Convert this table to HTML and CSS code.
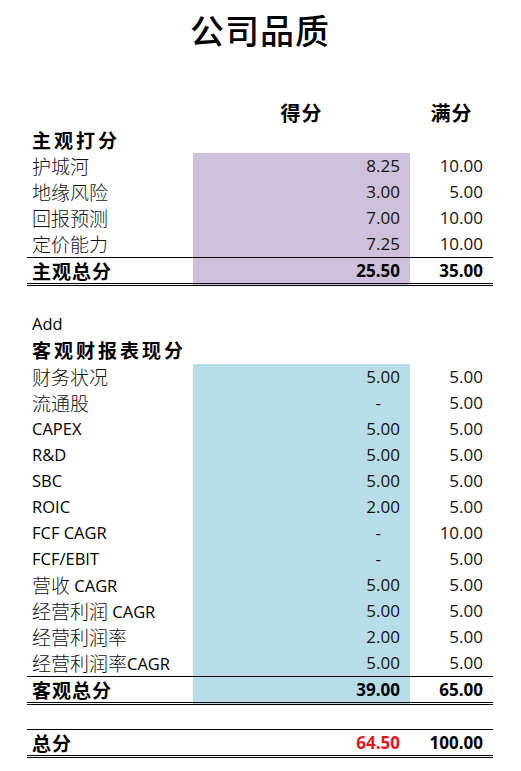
FILE: index.html
```html
<!DOCTYPE html>
<html lang="zh-CN">
<head>
<meta charset="utf-8">
<title>公司品质</title>
<link rel="stylesheet" href="styles.css">
</head>
<body>
<div class="sheet">
  <h1 class="title">公司品质</h1>

  <div class="row head">
    <div></div>
    <div class="hcell">得分</div>
    <div class="hcell">满分</div>
  </div>

  <div class="row sect first-sect"><div class="label bold">主观打分</div></div>

  <div class="row"><div class="label">护城河</div><div class="num score purple">8.25</div><div class="num">10.00</div></div>
  <div class="row"><div class="label">地缘风险</div><div class="num score purple">3.00</div><div class="num">5.00</div></div>
  <div class="row"><div class="label">回报预测</div><div class="num score purple">7.00</div><div class="num">10.00</div></div>
  <div class="row"><div class="label">定价能力</div><div class="num score purple">7.25</div><div class="num">10.00</div></div>
  <div class="row total"><div class="label tlabel">主观总分</div><div class="num score purple strong">25.50</div><div class="num strong">35.00</div></div>

  <div class="spacer"></div>
  <div class="row"><div class="label latin">Add</div></div>
  <div class="row sect second-sect"><div class="label bold">客观财报表现分</div></div>

  <div class="row"><div class="label">财务状况</div><div class="num score blue">5.00</div><div class="num">5.00</div></div>
  <div class="row"><div class="label">流通股</div><div class="num score blue dash">-</div><div class="num">5.00</div></div>
  <div class="row"><div class="label latin">CAPEX</div><div class="num score blue">5.00</div><div class="num">5.00</div></div>
  <div class="row"><div class="label latin">R&amp;D</div><div class="num score blue">5.00</div><div class="num">5.00</div></div>
  <div class="row"><div class="label latin">SBC</div><div class="num score blue">5.00</div><div class="num">5.00</div></div>
  <div class="row"><div class="label latin">ROIC</div><div class="num score blue">2.00</div><div class="num">5.00</div></div>
  <div class="row"><div class="label latin">FCF CAGR</div><div class="num score blue dash">-</div><div class="num">10.00</div></div>
  <div class="row"><div class="label latin">FCF/EBIT</div><div class="num score blue dash">-</div><div class="num">5.00</div></div>
  <div class="row"><div class="label">营收<span class="lat"> CAGR</span></div><div class="num score blue">5.00</div><div class="num">5.00</div></div>
  <div class="row"><div class="label">经营利润<span class="lat"> CAGR</span></div><div class="num score blue">5.00</div><div class="num">5.00</div></div>
  <div class="row"><div class="label">经营利润率</div><div class="num score blue">2.00</div><div class="num">5.00</div></div>
  <div class="row"><div class="label">经营利润率<span class="lat">CAGR</span></div><div class="num score blue">5.00</div><div class="num">5.00</div></div>
  <div class="row total"><div class="label tlabel">客观总分</div><div class="num score blue strong">39.00</div><div class="num strong">65.00</div></div>

  <div class="spacer small"></div>
  <div class="row total"><div class="label tlabel">总分</div><div class="num score strong red">64.50</div><div class="num strong">100.00</div></div>
</div>
</body>
</html>
```

FILE: styles.css
```css
html, body {
  margin: 0;
  padding: 0;
  background: #ffffff;
}

body {
  font-family: "Open Sans", "Noto Sans CJK SC", sans-serif;
  color: #111111;
}

.sheet {
  padding: 0 28px 0 27px;
  width: 466px;
}

.title {
  margin: 0;
  padding: 13px 0 54px;
  height: 34px;
  line-height: 34px;
  font-family: "Noto Sans CJK SC", sans-serif;
  font-size: 34px;
  font-weight: 500;
  text-align: center;
  color: #000;
  letter-spacing: 1px;
  width: 466px;
}

.row {
  display: grid;
  grid-template-columns: 166px 217px 83px;
  height: 26px;
  line-height: 26px;
}

.row > div {
  height: 100%;
  box-sizing: border-box;
}

.head {
  height: 24px;
  line-height: 24px;
}

.hcell {
  font-family: "Noto Sans CJK SC", sans-serif;
  font-size: 20px;
  font-weight: 700;
  text-align: center;
  color: #000;
  letter-spacing: 1px;
}

.first-sect {
  height: 28px;
  line-height: 29px;
}

.second-sect {
  height: 27px;
  line-height: 26px;
}

.label {
  padding-left: 5px;
  font-family: "Noto Sans CJK SC", sans-serif;
  font-size: 19px;
  font-weight: 300;
  white-space: nowrap;
  color: #111;
}

.label.latin {
  font-family: "Open Sans", sans-serif;
  font-size: 16.5px;
  font-weight: 400;
  color: #000;
}

.label.bold {
  font-weight: 700;
  letter-spacing: 3px;
  color: #000;
}

.lat {
  font-family: "Open Sans", sans-serif;
  font-size: 16.5px;
  font-weight: 400;
  color: #000;
  vertical-align: 1px;
}

.num {
  text-align: right;
  padding-right: 10px;
  font-size: 17px;
}

.score.purple {
  background: #ccc0da;
}

.score.blue {
  background: #b7dee8;
}

.dash {
  padding-right: 29px;
}

.strong {
  font-weight: 700;
  color: #000;
}

.red {
  color: #e8141c;
}

.total {
  height: 29px;
  line-height: 25px;
}

.total > div {
  border-top: 1px solid #000;
  border-bottom: 3px double #000;
}

.tlabel {
  font-weight: 700;
  letter-spacing: 1px;
  color: #000;
}

.spacer {
  height: 25px;
}

.spacer.small {
  height: 24px;
}
```
